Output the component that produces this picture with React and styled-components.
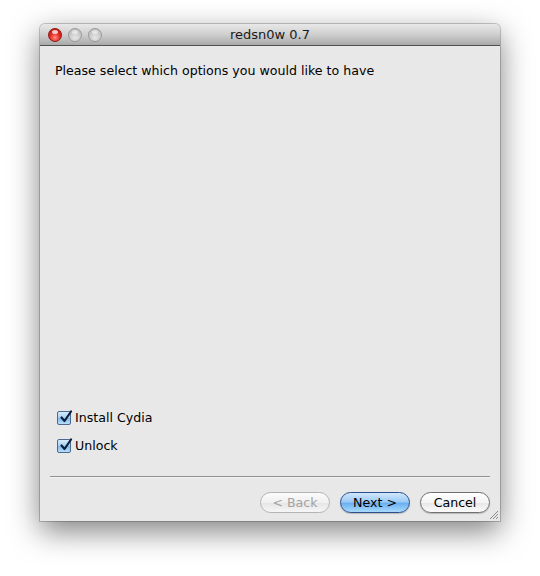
import React from "react";
import styled, { createGlobalStyle } from "styled-components";

const Global = createGlobalStyle`
  html, body { margin: 0; padding: 0; background: #ffffff; }
  body { width: 540px; height: 576px; overflow: hidden; font-family: "DejaVu Sans", "Liberation Sans", sans-serif; }
`;

const Stage = styled.div`
  width: 540px;
  height: 576px;
  padding: 24px 40px 0 40px;
  box-sizing: border-box;
`;

const Window = styled.div`
  width: 460px;
  height: 497px;
  display: flex;
  flex-direction: column;
  border-radius: 5px 5px 0 0;
  background: #e8e8e8;
  box-shadow: 0 10px 30px rgba(0, 0, 0, 0.5), 0 0 0 1px rgba(0, 0, 0, 0.2);
  overflow: hidden;
  position: relative;
`;

const TitleBar = styled.div`
  height: 21px;
  flex: 0 0 21px;
  display: flex;
  align-items: center;
  padding: 0 0 0 8px;
  background: linear-gradient(#e8e8e8 0%, #cfcfcf 50%, #a9a9a9 100%);
  border-bottom: 1px solid #515151;
  position: relative;
`;

const Lights = styled.div`
  display: flex;
  gap: 6px;
`;

const Light = styled.div`
  width: 14px;
  height: 14px;
  border-radius: 50%;
  box-sizing: border-box;
  border: 1px solid ${(p) => (p.$red ? "#8c1a17" : "#9a9a9a")};
  background: ${(p) =>
    p.$red
      ? "radial-gradient(circle at 50% 72%, #ff8f86 0%, #e42a22 45%, #b1110d 100%)"
      : "radial-gradient(circle at 50% 72%, #e6e6e6 0%, #cbcbcb 50%, #b3b3b3 100%)"};
  position: relative;
  &::after {
    content: "";
    position: absolute;
    left: 3px;
    top: 1px;
    width: 6px;
    height: 4px;
    border-radius: 50%;
    background: rgba(255, 255, 255, ${(p) => (p.$red ? 0.75 : 0.5)});
  }
`;

const Title = styled.div`
  position: absolute;
  left: 0;
  right: 0;
  top: 0;
  bottom: 0;
  display: flex;
  align-items: center;
  justify-content: center;
  font-size: 13px;
  color: #1a1a1a;
  pointer-events: none;
`;

const Content = styled.div`
  flex: 1;
  display: flex;
  flex-direction: column;
  padding: 17px 10px 8px 10px;
  position: relative;
`;

const Prompt = styled.div`
  font-size: 12.6px;
  line-height: 16px;
  color: #000;
  padding-left: 5px;
`;

const Options = styled.div`
  margin-top: auto;
  display: flex;
  flex-direction: column;
  gap: 12px;
  padding-left: 7px;
  margin-bottom: 22px;
`;

const Option = styled.label`
  display: flex;
  align-items: center;
  gap: 4px;
  font-size: 12.6px;
  line-height: 16px;
  color: #000;
`;

const Box = styled.span`
  width: 14px;
  height: 14px;
  box-sizing: border-box;
  border: 1px solid #4a6a8e;
  border-radius: 2px;
  background: linear-gradient(#d6ecfd 0%, #a6cff3 50%, #7fb8ea 51%, #b9ddfb 100%);
  display: flex;
  align-items: center;
  justify-content: center;
  position: relative;
  overflow: visible;
`;

const Separator = styled.div`
  height: 1px;
  background: #909090;
  border-bottom: 1px solid #f3f3f3;
  margin: 0 0 14px 0;
`;

const Buttons = styled.div`
  display: flex;
  justify-content: flex-end;
  gap: 10px;
`;

const Button = styled.div`
  width: 70px;
  height: 21px;
  box-sizing: border-box;
  padding-bottom: 1px;
  border-radius: 11px;
  display: flex;
  align-items: center;
  justify-content: center;
  font-size: 12.6px;
  border: 1px solid
    ${(p) => (p.$variant === "default" ? "#2c4f8c" : p.$variant === "disabled" ? "#b4b4b4" : "#707070")};
  color: ${(p) => (p.$variant === "disabled" ? "#a3a3a3" : "#000")};
  background: ${(p) =>
    p.$variant === "default"
      ? "linear-gradient(#d2e7fb 0%, #9ccbf5 45%, #6db0f0 55%, #a8dafc 100%)"
      : p.$variant === "disabled"
      ? "linear-gradient(#fbfbfb 0%, #f0f0f0 50%, #e6e6e6 55%, #f6f6f6 100%)"
      : "linear-gradient(#ffffff 0%, #f4f4f4 50%, #e8e8e8 55%, #fbfbfb 100%)"};
  box-shadow: ${(p) => (p.$variant === "disabled" ? "none" : "0 1px 1px rgba(0,0,0,0.2)")};
`;

const Grip = styled.svg`
  position: absolute;
  right: 1px;
  bottom: 1px;
`;

function Check() {
  return (
    <svg width="14" height="14" viewBox="0 0 14 14" style={{ position: "absolute", left: 1, top: -2 }}>
      <path d="M2.5 7.5 L5.5 11 L12 1.5" fill="none" stroke="#0d1f3a" strokeWidth="2.2" strokeLinecap="round" strokeLinejoin="round" />
    </svg>
  );
}

export default function App() {
  return (
    <>
      <Global />
      <Stage>
        <Window>
          <TitleBar>
            <Lights>
              <Light $red />
              <Light />
              <Light />
            </Lights>
            <Title>redsn0w 0.7</Title>
          </TitleBar>
          <Content>
            <Prompt>Please select which options you would like to have</Prompt>
            <Options>
              <Option>
                <Box>
                  <Check />
                </Box>
                Install Cydia
              </Option>
              <Option>
                <Box>
                  <Check />
                </Box>
                Unlock
              </Option>
            </Options>
            <Separator />
            <Buttons>
              <Button $variant="disabled">&lt; Back</Button>
              <Button $variant="default">Next &gt;</Button>
              <Button>Cancel</Button>
            </Buttons>
          </Content>
          <Grip width="12" height="12" viewBox="0 0 12 12">
            <path d="M11 3 L3 11 M11 6 L6 11 M11 9 L9 11" stroke="#8a8a8a" strokeWidth="1" />
          </Grip>
        </Window>
      </Stage>
    </>
  );
}
